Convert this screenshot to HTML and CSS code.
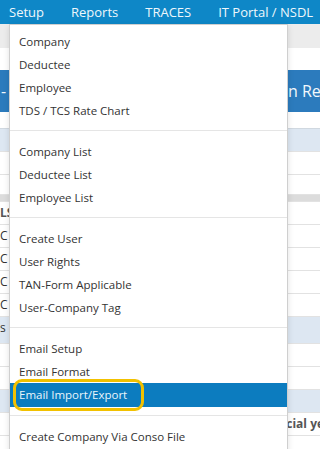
FILE: index.html
```html
<!DOCTYPE html>
<html>
<head>
	<title>Setup menu</title>
	<link rel="stylesheet" href="styles.css">
</head>
<body>
	<nav class="topnav">
		<a href="#">Setup</a>
		<a href="#">Reports</a>
		<a href="#">TRACES</a>
		<a href="#">IT Portal / NSDL</a>
	</nav>

	<div class="page">
		<div class="subbar"></div>
		<div class="title">
			<span class="title-left">- F</span>
			<span class="title-right">n Return</span>
		</div>
		<div class="grid">
			<div class="row head"><span></span><span></span></div>
			<div class="row"><span></span><span></span></div>
			<div class="row short"><span></span><span></span></div>
			<div class="row strip"><span></span><span></span></div>
			<div class="row bold"><span>LS</span><span></span></div>
			<div class="row"><span>C</span><span></span></div>
			<div class="row"><span>C</span><span></span></div>
			<div class="row"><span>C</span><span></span></div>
			<div class="row"><span>C</span><span></span></div>
			<div class="row head tall"><span>s</span><span></span></div>
			<div class="row"><span></span><span></span></div>
			<div class="row"><span></span><span></span></div>
			<div class="row head"><span></span><span></span></div>
			<div class="row bold"><span></span><span>Financial year</span></div>
			<div class="row"><span></span><span></span></div>
		</div>
	</div>

	<ul class="dropdown">
		<li><a href="#">Company</a></li>
		<li><a href="#">Deductee</a></li>
		<li><a href="#">Employee</a></li>
		<li><a href="#">TDS / TCS Rate Chart</a></li>
		<li class="divider"></li>
		<li><a href="#">Company List</a></li>
		<li><a href="#">Deductee List</a></li>
		<li><a href="#">Employee List</a></li>
		<li class="divider"></li>
		<li><a href="#">Create User</a></li>
		<li><a href="#">User Rights</a></li>
		<li><a href="#">TAN-Form Applicable</a></li>
		<li><a href="#">User-Company Tag</a></li>
		<li class="divider"></li>
		<li><a href="#">Email Setup</a></li>
		<li><a href="#">Email Format</a></li>
		<li class="active"><a href="#">Email Import/Export</a><span class="ring"></span></li>
		<li class="divider"></li>
		<li><a href="#">Create Company Via Conso File</a></li>
	</ul>
</body>
</html>
```

FILE: styles.css
```css
body {
	margin: 0;
	height: 449px;
	overflow: hidden;
	position: relative;
	background: #fff;
	font-family: "Open Sans", "Noto Sans", sans-serif;
}

.topnav {
	display: flex;
	gap: 27px;
	height: 24px;
	padding-left: 9px;
	background: #0e87c7;
	align-items: center;
}

.topnav a {
	color: #eef7fc;
	text-decoration: none;
	font-size: 13px;
	line-height: 24px;
	white-space: nowrap;
}

.subbar {
	height: 24px;
	background: #ececec;
}

.title {
	display: grid;
	grid-template-columns: 288px 1fr;
	align-items: center;
	height: 42px;
	margin-top: 22px;
	background: #2c7bbd;
	color: #f2f8fc;
	font-size: 16px;
	white-space: nowrap;
	overflow: hidden;
}

.title-left {
	padding-left: 1px;
}

.grid {
	margin-top: 16px;
	border-top: solid 1px #d0d8e0;
}

.row {
	display: grid;
	grid-template-columns: 253px 1fr;
	height: 22px;
	border-bottom: solid 1px #e2e2e2;
	font-size: 12px;
	line-height: 22px;
	color: #333;
	white-space: nowrap;
	overflow: hidden;
}

.row.head {
	background: #dde7f2;
}

.row.short {
	height: 19px;
}

.row.strip {
	height: 6px;
	background: #dcdcdc;
}

.row.tall {
	height: 26px;
}

.row.bold {
	font-weight: 700;
	color: #555;
}

.dropdown {
	position: absolute;
	left: 9px;
	top: 24px;
	width: 277px;
	height: 440px;
	margin: 0;
	padding: 5px 0 0;
	list-style: none;
	background: #fff;
	border: solid 1px #cfcfcf;
	box-shadow: 0 2px 6px rgba(0,0,0,0.12);
}

.dropdown li {
	position: relative;
}

.dropdown a {
	display: block;
	height: 23px;
	padding-left: 9px;
	font-size: 11.5px;
	line-height: 23px;
	color: #333;
	text-decoration: none;
	white-space: nowrap;
}

.dropdown .divider {
	height: 1px;
	margin: 8px 0 9px;
	background: #e5e5e5;
}

.dropdown .active a {
	height: 24px;
	line-height: 24px;
	background: #0c7cbf;
	color: #eaf5fb;
}

.ring {
	position: absolute;
	left: 3px;
	top: -4px;
	width: 125px;
	height: 26px;
	border: solid 3px #f2c100;
	border-radius: 9px;
}
```
